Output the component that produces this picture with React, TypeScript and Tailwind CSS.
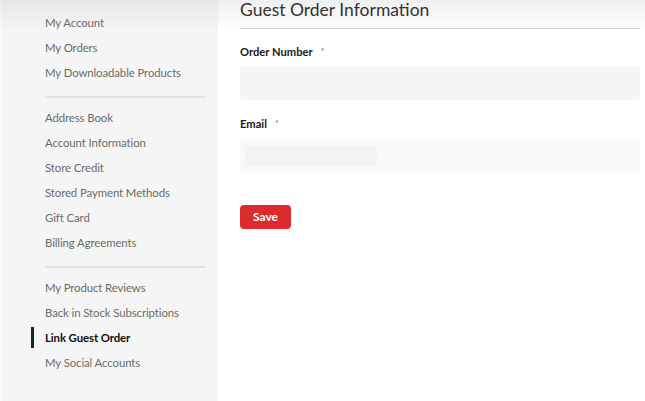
import React from 'react';

const groups = [
  ['My Account', 'My Orders', 'My Downloadable Products'],
  ['Address Book', 'Account Information', 'Store Credit', 'Stored Payment Methods', 'Gift Card', 'Billing Agreements'],
  ['My Product Reviews', 'Back in Stock Subscriptions', 'Link Guest Order', 'My Social Accounts'],
];

const active = 'Link Guest Order';

function Field({ label, light, autofill }: { label: string; light?: boolean; autofill?: boolean }) {
  return (
    <div className="flex flex-col">
      <label className="text-[11.2px] font-bold text-[#1a1a1a] leading-[12px] h-[12px]">
        {label}
        <span className="ml-[8px] text-[9px] text-[#e0474c] font-normal align-top">*</span>
      </label>
      <div className={`mt-[9px] h-[33px] rounded-[4px] ${light ? 'bg-[#f9f9f9]' : 'bg-[#f4f5f7]'} flex items-center px-[5px]`}>
        {autofill && <div className="h-[20px] w-[132px] bg-[#f2f3f4]" />}
      </div>
    </div>
  );
}

export default function App() {
  return (
    <div className="relative flex h-[401px] w-full bg-white font-['Lato',sans-serif] overflow-hidden">
      {/* header drop shadow */}
      <div className="pointer-events-none absolute left-0 right-0 top-0 h-[30px] bg-gradient-to-b from-[#00000010] to-transparent" />

      <aside className="w-[218px] shrink-0 bg-[#f5f5f5] border-l-2 border-[#fafafa] pt-[10px]">
        {groups.map((items, gi) => (
          <div key={gi}>
            {gi > 0 && <div className="ml-[43px] mr-[13px] mt-[11px] mb-[7px] h-[2px] bg-[#e2e2e2]" />}
            <ul>
              {items.map((item) => (
                <li
                  key={item}
                  className={`relative h-[25px] flex items-center pl-[43px] text-[11.4px] tracking-[-0.1px] ${
                    item === active ? 'font-bold text-[#111]' : 'text-[#6b6b6b]'
                  }`}
                >
                  {item === active && (
                    <span className="absolute left-[29px] top-[2px] h-[21px] w-[3px] bg-[#222]" />
                  )}
                  {item}
                </li>
              ))}
            </ul>
          </div>
        ))}
      </aside>

      <main className="flex-1 pl-[22px] pr-[5px]">
        <h1 className="text-[17.5px] text-[#333] leading-[18px] mt-[1px] pb-[9px] border-b border-[#d6d6d6]">
          Guest Order Information
        </h1>
        <div className="mt-[17px] flex flex-col gap-[18px]">
          <Field label="Order Number" />
          <Field label="Email" light autofill />
        </div>
        <button className="mt-[33px] h-[24px] w-[51px] rounded-[4px] bg-[#dd2a2f] text-white text-[12px] font-bold">
          Save
        </button>
      </main>
    </div>
  );
}
